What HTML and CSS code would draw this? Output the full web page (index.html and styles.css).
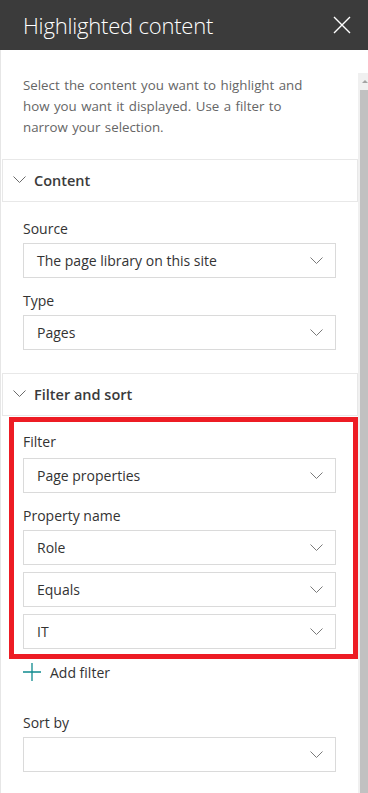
FILE: index.html
```html
<!DOCTYPE html>
<html lang="en">
<head>
<meta charset="utf-8">
<title>Highlighted content</title>
<link rel="stylesheet" href="styles.css">
</head>
<body>
<div class="panel">
  <header class="header">
    <h1 class="title">Highlighted content</h1>
    <svg class="close" width="18" height="18" viewBox="0 0 18 18"><path d="M1 1 L17 17 M17 1 L1 17" stroke="#fff" stroke-width="1.4" fill="none"/></svg>
  </header>
  <div class="body">
    <div class="content">
      <p class="intro">Select the content you want to highlight and how you want it displayed. Use a filter to narrow your selection.</p>

      <div class="section-head">
        <svg class="sec-chev" width="13" height="7" viewBox="0 0 13 7"><path d="M0.5 0.5 L6.5 6.5 L12.5 0.5" stroke="#6b6b6b" stroke-width="1" fill="none"/></svg>
        <span>Content</span>
      </div>
      <div class="form">
        <div class="label">Source</div>
        <div class="dropdown"><span>The page library on this site</span><svg class="chev" width="13" height="7" viewBox="0 0 13 7"><path d="M0.5 0.5 L6.5 6.5 L12.5 0.5" stroke="#7a7a7a" stroke-width="1" fill="none"/></svg></div>
        <div class="label">Type</div>
        <div class="dropdown"><span>Pages</span><svg class="chev" width="13" height="7" viewBox="0 0 13 7"><path d="M0.5 0.5 L6.5 6.5 L12.5 0.5" stroke="#7a7a7a" stroke-width="1" fill="none"/></svg></div>
      </div>

      <div class="section-head section-head--second">
        <svg class="sec-chev" width="13" height="7" viewBox="0 0 13 7"><path d="M0.5 0.5 L6.5 6.5 L12.5 0.5" stroke="#6b6b6b" stroke-width="1" fill="none"/></svg>
        <span>Filter and sort</span>
      </div>
      <div class="form">
        <div class="highlight">
          <div class="label">Filter</div>
          <div class="dropdown"><span>Page properties</span><svg class="chev" width="13" height="7" viewBox="0 0 13 7"><path d="M0.5 0.5 L6.5 6.5 L12.5 0.5" stroke="#7a7a7a" stroke-width="1" fill="none"/></svg></div>
          <div class="label">Property name</div>
          <div class="stack">
            <div class="dropdown"><span>Role</span><svg class="chev" width="13" height="7" viewBox="0 0 13 7"><path d="M0.5 0.5 L6.5 6.5 L12.5 0.5" stroke="#7a7a7a" stroke-width="1" fill="none"/></svg></div>
            <div class="dropdown"><span>Equals</span><svg class="chev" width="13" height="7" viewBox="0 0 13 7"><path d="M0.5 0.5 L6.5 6.5 L12.5 0.5" stroke="#7a7a7a" stroke-width="1" fill="none"/></svg></div>
            <div class="dropdown"><span>IT</span><svg class="chev" width="13" height="7" viewBox="0 0 13 7"><path d="M0.5 0.5 L6.5 6.5 L12.5 0.5" stroke="#7a7a7a" stroke-width="1" fill="none"/></svg></div>
          </div>
        </div>
        <div class="add">
          <svg width="18" height="18" viewBox="0 0 18 18"><path d="M9 0 V18 M0 9 H18" stroke="#0f8a8e" stroke-width="1.3" fill="none"/></svg>
          <span>Add filter</span>
        </div>
        <div class="label label--sort">Sort by</div>
        <div class="dropdown"><span></span><svg class="chev" width="13" height="7" viewBox="0 0 13 7"><path d="M0.5 0.5 L6.5 6.5 L12.5 0.5" stroke="#7a7a7a" stroke-width="1" fill="none"/></svg></div>
      </div>
    </div>
    <div class="scrollbar">
      <div class="scroll-up"></div>
      <div class="thumb"></div>
    </div>
  </div>
</div>
</body>
</html>
```

FILE: styles.css
```css
* { box-sizing: border-box; }
html, body { margin: 0; padding: 0; background: #fff; }
body {
  font-family: "Open Sans", "Noto Sans", sans-serif;
  color: #333;
}
.panel {
  width: 368px;
  height: 793px;
  overflow: hidden;
  display: flex;
  flex-direction: column;
}
.header {
  height: 50px;
  flex: none;
  background: #3b3b3b;
  display: flex;
  align-items: center;
  justify-content: space-between;
  padding: 0 17px 0 23px;
}
.title {
  margin: 0;
  color: #fff;
  font-weight: 300;
  font-size: 22px;
  line-height: 26px;
  letter-spacing: -0.2px;
}
.close { display: block; }
.body {
  flex: 1;
  display: flex;
  min-height: 0;
}
.content {
  flex: 1;
  border-left: 1px solid #e6e6e6;
  min-width: 0;
}
.intro {
  margin: 0;
  padding: 25px 30px 0 22px;
  font-size: 13.3px;
  word-spacing: 1px;
  line-height: 21px;
  color: #666;
}
.section-head {
  margin: 21px 0 0 1px;
  height: 43px;
  border: 1px solid #e8e8e8;
  display: flex;
  align-items: center;
  padding-left: 10px;
  gap: 8px;
  font-size: 14.5px;
  font-weight: 600;
  color: #3a3a3a;
}
.section-head--second { margin-top: 23px; height: 43px; }
.sec-chev { display: block; margin-top: -2px; }
.form {
  padding: 0 22px 0 22px;
}
.label {
  font-size: 14px;
  line-height: 20px;
  color: #333;
  margin-top: 17px;
  margin-bottom: 4px;
}
.dropdown + .label { margin-top: 13px; }
.dropdown {
  height: 35px;
  border: 1px solid #dadada;
  display: flex;
  align-items: center;
  justify-content: space-between;
  padding: 0 12px 0 13px;
  font-size: 14px;
  color: #333;
}
.chev { display: block; }
.stack {
  display: flex;
  flex-direction: column;
  gap: 7px;
}
.highlight {
  margin: 1px -22px 0 -14px;
  border: 5px solid #ed1c24;
  padding: 0 17px 5px 9px;
}
.highlight > .label:first-child { margin-top: 10px; margin-bottom: 6px; }
.add {
  display: flex;
  align-items: center;
  gap: 9px;
  height: 20px;
  margin-top: 3px;
  font-size: 14px;
  color: #333;
}
.add svg { display: block; }
.label--sort { margin-top: 31px; }
.scrollbar {
  width: 10px;
  flex: none;
  margin-top: 23px;
  background: #f0f0f0;
  display: flex;
  flex-direction: column;
  align-items: flex-end;
}
.scroll-up {
  width: 8px;
  height: 17px;
  position: relative;
}
.scroll-up::after {
  content: "";
  position: absolute;
  left: 2px;
  top: 7px;
  border-left: 3px solid transparent;
  border-right: 3px solid transparent;
  border-bottom: 3px solid #a3a3a3;
}
.thumb {
  width: 8px;
  flex: 1;
  background: #c1c1c1;
}
```
